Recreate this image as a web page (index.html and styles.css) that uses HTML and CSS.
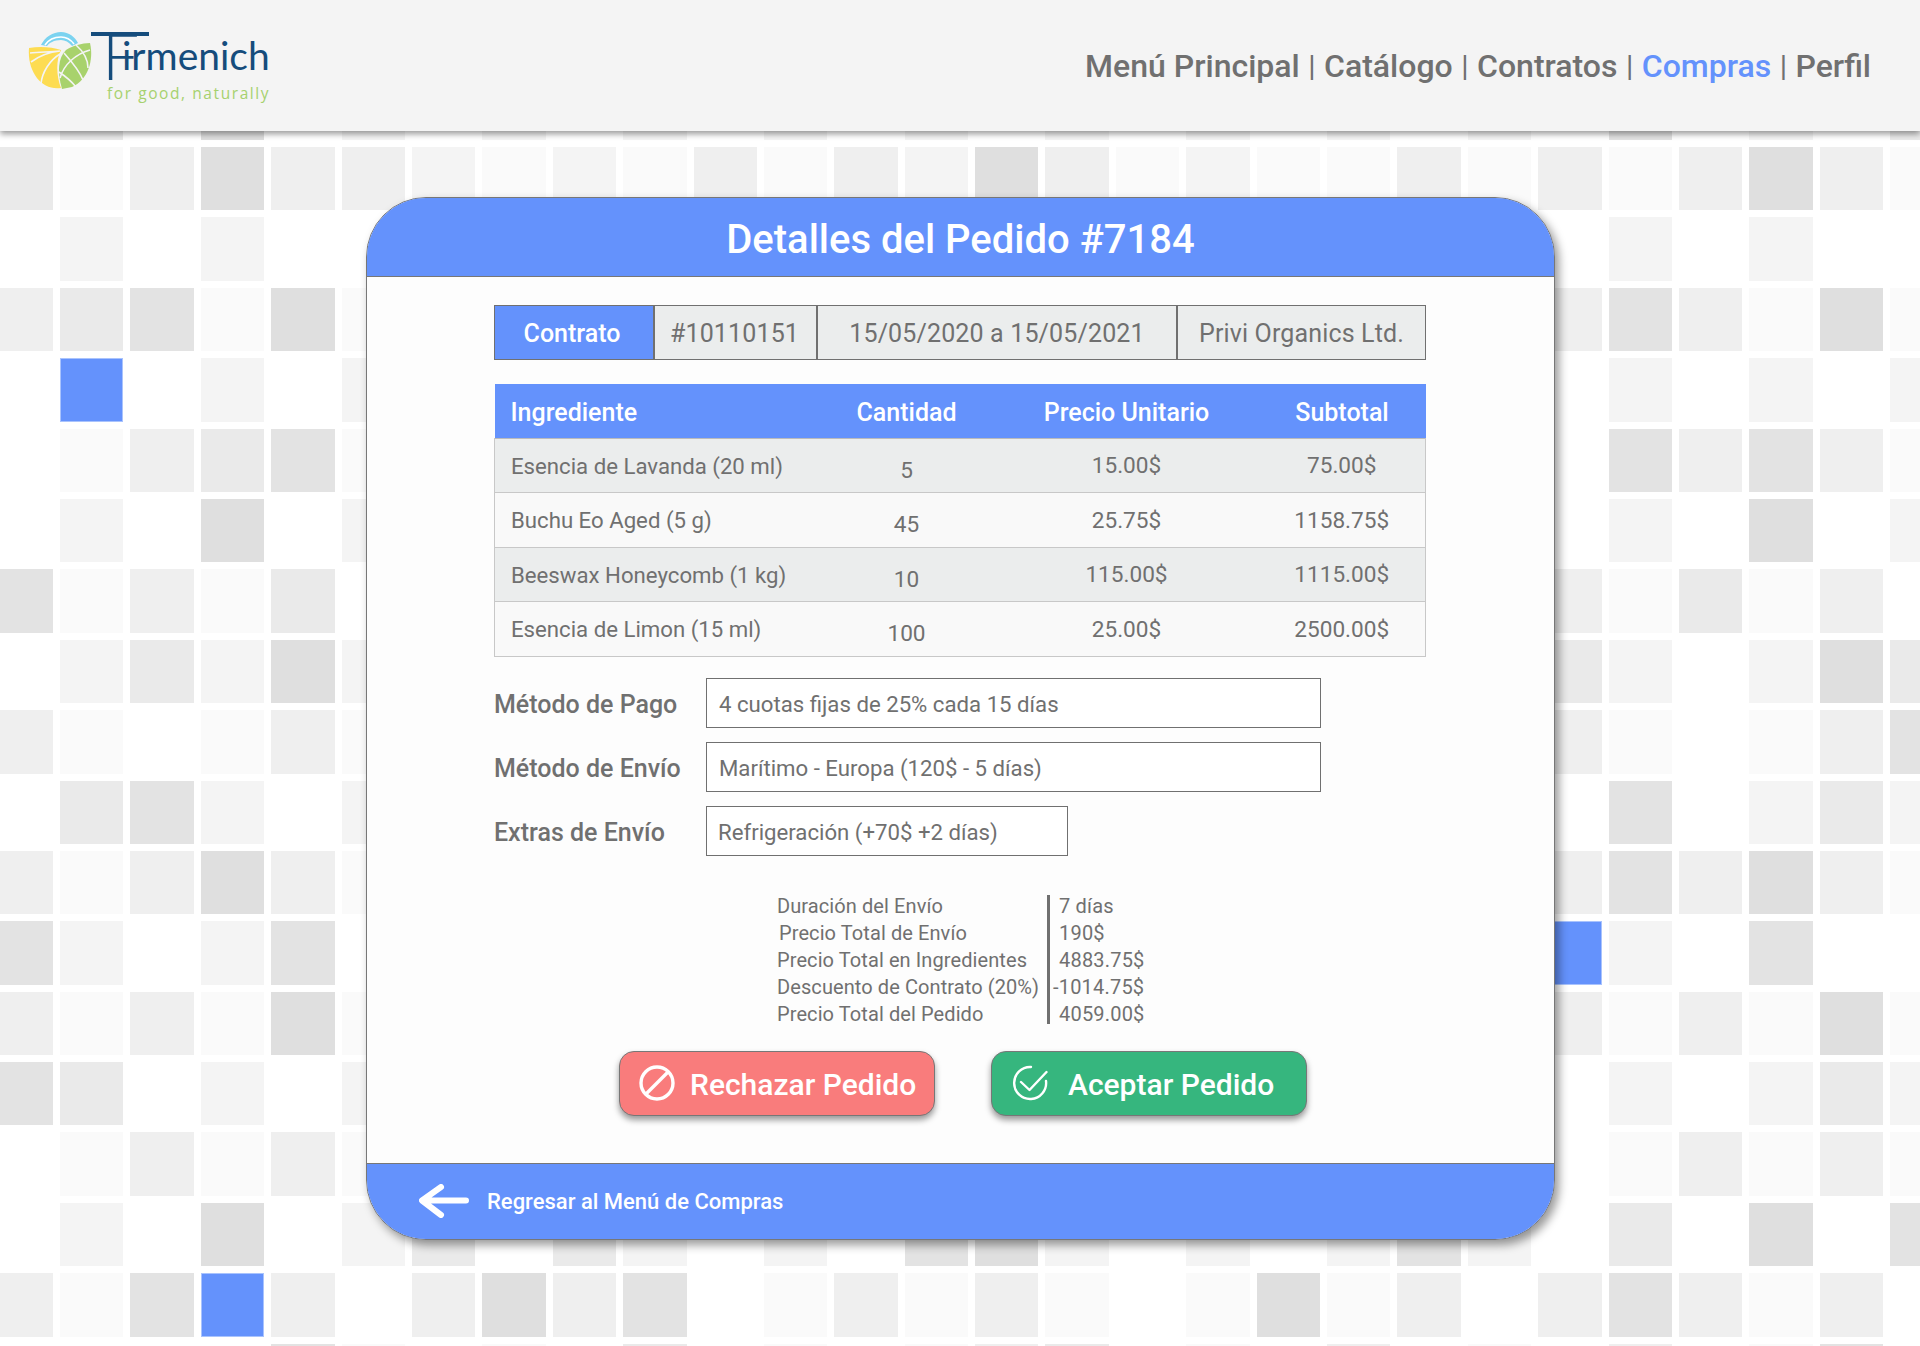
FILE: index.html
```html
<!DOCTYPE html>
<html lang="es">
<head>
	<meta charset="UTF-8">
	<title>Detalles del Pedido</title>
	<link rel="stylesheet" href="styles.css">
</head>
<body>
<div class="tiles" id="tiles"></div>
<header class="topbar">
	<div class="logo">
		<svg class="logo-mark" viewBox="28 30 66 62" width="66" height="62">
			<path fill="#7bd3f0" d="M41 45C45 37 53 32 61 32C69 32 75 37 78 43L72 46C69 42 65 40 61 40C54 40 49 43 47 46Z"/>
			<path fill="none" stroke="#fff" stroke-width="1.6" d="M45 45C49 39 55 37 61 37C67 37 71 40 74 44"/>
			<path fill="#fddc52" d="M29 48C40 46 52 47 61 50C56 60 56 75 61 88C42 91 27 72 29 48Z"/>
			<path fill="none" stroke="#f4f4f4" stroke-width="1.6" d="M60 51C50 52 39 56 31 62M60 54C50 60 42 72 41 84M30 53C40 52 50 52 60 51"/>
			<path fill="#a8d26c" d="M62 89C57 72 58 58 66 50C72 46 82 43 90 43C94 60 88 80 72 87Z"/>
			<path fill="none" stroke="#f4f4f4" stroke-width="1.6" d="M76 45C84 52 88 60 88 68M64 53C72 62 80 72 83 80M59 72C65 76 72 82 76 87M90 50C76 54 64 64 60 78"/>
		</svg>
		<div class="logo-text">
			<div class="logo-name"><span class="logo-f">F</span>irmenich</div>
			<div class="logo-tag">for good, naturally</div>
		</div>
	</div>
	<nav class="menu">
		<a>Menú Principal</a><span>|</span><a>Catálogo</a><span>|</span><a>Contratos</a><span>|</span><a class="active">Compras</a><span>|</span><a>Perfil</a>
	</nav>
</header>

<main class="card">
	<h1 class="card-title">Detalles del Pedido #7184</h1>
	<div class="card-body">
		<div class="contract">
			<div class="c-cell c-name">Contrato</div>
			<div class="c-cell c-num">#10110151</div>
			<div class="c-cell c-date">15/05/2020 a 15/05/2021</div>
			<div class="c-cell c-org">Privi Organics Ltd.</div>
		</div>

		<table class="items">
			<thead>
				<tr><th>Ingrediente</th><th>Cantidad</th><th>Precio Unitario</th><th>Subtotal</th></tr>
			</thead>
			<tbody>
				<tr><td>Esencia de Lavanda (20 ml)</td><td class="qty">5</td><td>15.00$</td><td>75.00$</td></tr>
				<tr><td>Buchu Eo Aged (5 g)</td><td class="qty">45</td><td>25.75$</td><td>1158.75$</td></tr>
				<tr><td>Beeswax Honeycomb (1 kg)</td><td class="qty">10</td><td>115.00$</td><td>1115.00$</td></tr>
				<tr><td>Esencia de Limon (15 ml)</td><td class="qty">100</td><td>25.00$</td><td>2500.00$</td></tr>
			</tbody>
		</table>

		<div class="fields">
			<div class="field"><label>Método de Pago</label><div class="box">4 cuotas fijas de 25% cada 15 días</div></div>
			<div class="field"><label>Método de Envío</label><div class="box">Marítimo - Europa (120$ - 5 días)</div></div>
			<div class="field"><label>Extras de Envío</label><div class="box box-small">Refrigeración (+70$ +2 días)</div></div>
		</div>

		<div class="summary">
			<div class="sum-labels">
				<div>Duración del Envío</div>
				<div class="shift">Precio Total de Envío</div>
				<div>Precio Total en Ingredientes</div>
				<div>Descuento de Contrato (20%)</div>
				<div>Precio Total del Pedido</div>
			</div>
			<div class="sum-line"></div>
			<div class="sum-values">
				<div>7 días</div>
				<div>190$</div>
				<div>4883.75$</div>
				<div class="minus">-1014.75$</div>
				<div>4059.00$</div>
			</div>
		</div>

		<div class="actions">
			<button class="btn btn-no">
				<svg viewBox="0 0 36 36" width="36" height="36" fill="none" stroke="#fff" stroke-width="3.400"><circle cx="18" cy="18" r="16"/><path d="M7 29L29 7"/></svg>
				<span>Rechazar Pedido</span>
			</button>
			<button class="btn btn-yes">
				<svg viewBox="0 0 36 36" width="36" height="36" fill="none" stroke="#fff" stroke-width="2.400" stroke-linecap="round" stroke-linejoin="round"><path d="M19 2A16 16 0 1 0 34 16"/><path d="M9 17L17.500 25L34.500 7"/></svg>
				<span>Aceptar Pedido</span>
			</button>
		</div>
	</div>
	<a class="card-foot">
		<svg viewBox="0 0 50 34" width="50" height="34" fill="none" stroke="#fff" stroke-width="6" stroke-linecap="round" stroke-linejoin="round"><path d="M47 16.500H4M22 3L3 16.500L22 31"/></svg>
		Regresar al Menú de Compras
	</a>
</main>
<script src="bg.js"></script>
</body>
</html>
```
FILE: styles.css
```css
*{margin: 0;padding: 0;box-sizing: border-box;}
html,body{
	height:1346px;
	overflow:hidden;
}
body{
	background:#fff;
	font-family:Roboto,"Liberation Sans",sans-serif;
	color:#707070;
	position:relative;
}

/* background mosaic */
.tiles{
	position:absolute;
	left:-10.4px;
	top:76.6px;
	display:grid;
	grid-template-columns:repeat(28,63.4px);
	grid-auto-rows:63.4px;
	gap:7px;
}
.t0{background:#fff;}
.ta{background:#fafafa;}
.tb{background:#f4f4f4;}
.tc{background:#efefef;}
.td{background:#eaeaea;}
.te{background:#e3e3e3;}
.tf{background:#dfdfdf;}
.tB{background:#6492fc;box-shadow:0 0 0 1px #a9c3fd inset;}

/* top bar */
.topbar{
	position:relative;
	height:131px;
	background:#f4f4f4;
	box-shadow:0 3px 6px rgba(0,0,0,.4);
	display:flex;
	align-items:center;
	justify-content:space-between;
	padding:0 49px 0 28px;
}
.logo{
	display:flex;
	align-items:flex-start;
	height:70px;
	margin-top:-5px;
}
.logo-mark{
	flex:none;
	margin-top:2px;
}
.logo-text{
	margin:3px 0 0 -3px;
}
.logo-name{
	font-family:Lato,sans-serif;
	font-weight:400;
	font-size:39px;
	line-height:48px;
	color:#154c7c;
	white-space:nowrap;
}
.logo-f{
	position:relative;
	display:inline-block;
	width:20px;
	margin-left:11px;
	font-weight:300;
	font-size:66px;
	line-height:48px;
	vertical-align:-10px;
}
/* the long top bar of the F */
.logo-f::before{
	content:"";
	position:absolute;
	left:-11px;
	top:1px;
	width:58px;
	height:4px;
	background:#154c7c;
}
.logo-tag{
	font-family:"Open Sans",sans-serif;
	font-size:15.500px;
	line-height:20px;
	letter-spacing:1.580px;
	color:#a6d16e;
	margin:4px 0 0 16px;
	white-space:nowrap;
}
.menu{
	display:flex;
	align-items:center;
	font-size:32px;
	font-weight:500;
	white-space:nowrap;
}
.menu span{
	font-weight:400;
	margin:0 8.500px;
	font-size:30px;
}
.menu .active{
	color:#6492fc;
}

/* card */
.card{
	position:absolute;
	left:366px;
	top:197px;
	width:1189px;
	height:1043px;
	background:#fdfdfd;
	border:1px solid #777;
	border-radius:60px;
	box-shadow:4px 5px 10px rgba(0,0,0,.4);
	overflow:hidden;
	display:flex;
	flex-direction:column;
}
.card-title{
	height:79px;
	background:#6492fc;
	border-bottom:1px solid #777;
	color:#fff;
	font-size:40px;
	font-weight:500;
	line-height:84px;
	text-align:center;
}
.card-body{
	flex:1;
	padding:28px 129px 0 127px;
}

.contract{
	display:flex;
	height:55px;
	width:932px;
	border:1px solid #707070;
	font-size:25px;
	background:#ebeded;
}
.c-cell{
	display:flex;
	align-items:center;
	justify-content:center;
	border-left:2px solid #707070;
	letter-spacing:.15px;
	padding-top:2px;
}
.c-name{
	width:158px;
	border-left:0;
	padding-right:4px;
	background:#6492fc;
	color:#fff;
	font-weight:500;
	letter-spacing:0;
}
.c-num{
	width:163px;
	padding-right:2px;
}
.c-date{width:360px;}
.c-org{width:249px;}

.items{
	width:931px;
	margin-top:24px;
	border-collapse:collapse;
	table-layout:fixed;
}
.items th{
	height:54px;
	padding-top:3px;
	background:#6492fc;
	color:#fff;
	font-size:25px;
	font-weight:500;
	text-align:center;
}
.items th:nth-child(1){width:324px;}
.items th:nth-child(2){width:176px;}
.items th:nth-child(3){width:264px;}
.items th:nth-child(4){width:167px;}
.items th:first-child,
.items td:first-child{
	text-align:left;
	padding-left:16px;
}
.items td{
	height:54.500px;
	font-size:22.600px;
	text-align:center;
	border-top:1px solid #bbb;
	border-bottom:1px solid #c8c8c8;
	padding-top:1px;
}
.items td:first-child{
	font-size:22.200px;
	border-left:1px solid #c8c8c8;
}
.items td:last-child{border-right:1px solid #c8c8c8;}
.items td.qty{
	padding-top:10px;
}
.items tbody tr:nth-child(odd){background:#ebeded;}
.items tbody tr:nth-child(even){background:#f9f9f9;}

.fields{
	margin-top:21px;
	display:flex;
	flex-direction:column;
	gap:14px;
}
.field{
	display:flex;
	align-items:center;
}
.field label{
	width:212px;
	padding-top:3px;
	font-size:25px;
	font-weight:500;
}
.box{
	width:615px;
	height:50px;
	border:1px solid #707070;
	background:#fff;
	font-size:22.200px;
	line-height:50px;
	padding-left:12px;
}
.box-small{
	width:362px;
	padding-left:11px;
}

.summary{
	display:flex;
	margin:37px 0 0 283px;
	font-size:20px;
	line-height:27px;
	letter-spacing:.2px;
}
.sum-labels{
	width:270px;
	letter-spacing:.09px;
}
.sum-labels .shift{padding-left:2px;}
.sum-line{
	width:3px;
	height:129px;
	margin-top:2px;
	background:#707070;
}
.sum-values{padding-left:9px;}
.sum-values .minus{margin-left:-6px;}

.actions{
	display:flex;
	gap:56px;
	margin:23px 0 0 125px;
}
.btn{
	width:316px;
	height:65px;
	display:flex;
	align-items:center;
	gap:15px;
	padding-left:19px;
	border:1px solid #777;
	border-radius:15px;
	box-shadow:0 4px 6px rgba(0,0,0,.4);
	color:#fff;
	font-family:inherit;
	font-size:30px;
	font-weight:500;
}
.btn span{padding-top:2px;}
.btn-no{background:#f97c7c;}
.btn-yes{
	background:#36b67e;
	padding-left:20px;
	gap:20px;
}

.card-foot{
	height:76px;
	flex:none;
	display:flex;
	align-items:center;
	gap:18px;
	padding:0 0 1px 52px;
	background:#6492fc;
	border-top:1px solid #777;
	color:#fff;
	font-size:22px;
	font-weight:500;
}
```
FILE: bg.js
```js
// mosaic behind the card, one letter per tile
// a space stands for the 16 tiles hidden by the card
var rows = [
	"0d0f0b0b0b0b0b0b0b0b0b0e0b0d",
	"dacfccbabacacbfcabaacacacfca",
	"0b0b00 0b0b00",
	"cdeafa cecafa",
	"0B0b0b 0b0b0b",
	"0acdea 0ececa",
	"0b0f0b 0b0f0b",
	"eacad0 cadac0",
	"0bdbfb db0bfd",
	"ca0aca ca0ace",
	"0deb0b 0e0bdb",
	"cacfca cecfca",
	"eb0be0 Bb0e00",
	"cacafa cacafa",
	"ed0b0b 0b0bdb",
	"0acaca 0acaca",
	"0b0f0bd0db0b0efb0b0beb0d0f0e",
	"caeBc0cfce0acaca0afac0cecac0",
	"0000ea0a0d0a0acd0a0c0a0c0ae0"
];
var tiles = document.getElementById("tiles");
for(var i = 0;i < rows.length;i++){
	var row = rows[i].replace(" ","0000000000000000");
	for(var j = 0;j < row.length;j++){
		var div = document.createElement("div");
		div.className = "t" + row.charAt(j);
		tiles.appendChild(div);
	}
}
```
